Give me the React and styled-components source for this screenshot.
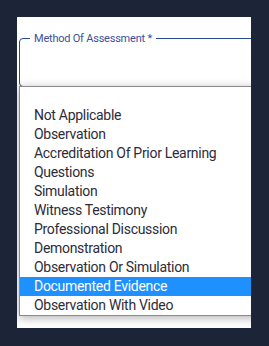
import React from 'react';
import styled, { createGlobalStyle } from 'styled-components';

const options = [
  'Not Applicable',
  'Observation',
  'Accreditation Of Prior Learning',
  'Questions',
  'Simulation',
  'Witness Testimony',
  'Professional Discussion',
  'Demonstration',
  'Observation Or Simulation',
  'Documented Evidence',
  'Observation With Video',
];

const GlobalStyle = createGlobalStyle`
  html, body {
    margin: 0;
    padding: 0;
    background: #1c2537;
    font-family: Roboto, "Liberation Sans", sans-serif;
  }
`;

const Panel = styled.div`
  margin: 17px;
  width: 234px;
  height: 311px;
  background: #ffffff;
  overflow: hidden;
  padding-top: 1px;
  box-sizing: border-box;
`;

const Field = styled.fieldset`
  margin: 14px 0 0 2px;
  padding: 0 10px;
  width: 260px;
  height: 55px;
  box-sizing: border-box;
  border: 1px solid #2b4a96;
  border-radius: 4px;
`;

const Legend = styled.legend`
  padding: 0 4px;
  font-size: 11px;
  line-height: 13px;
  letter-spacing: -0.22px;
  color: #3c4f9c;
`;

const List = styled.ul`
  position: relative;
  list-style: none;
  margin: -1px 0 0 2px;
  padding: 19px 0 0;
  width: 260px;
  border: 1px solid #8a8a8a;
  background: #ffffff;
  box-shadow: 0 2px 9px rgba(0, 0, 0, 0.3);
`;

const Item = styled.li`
  height: 19px;
  line-height: 19px;
  padding-left: 14px;
  font-size: 14px;
  letter-spacing: -0.3px;
  color: ${(p) => (p.$active ? '#ffffff' : '#2c2c3a')};
  background: ${(p) => (p.$active ? '#1e90ff' : 'transparent')};
  white-space: nowrap;
`;

const App = () => {
  return (
    <>
      <GlobalStyle />
      <Panel>
        <Field>
          <Legend>Method Of Assessment *</Legend>
        </Field>
        <List>
          {options.map((o) => (
            <Item key={o} $active={o === 'Documented Evidence'}>
              {o}
            </Item>
          ))}
        </List>
      </Panel>
    </>
  );
};

export default App;
